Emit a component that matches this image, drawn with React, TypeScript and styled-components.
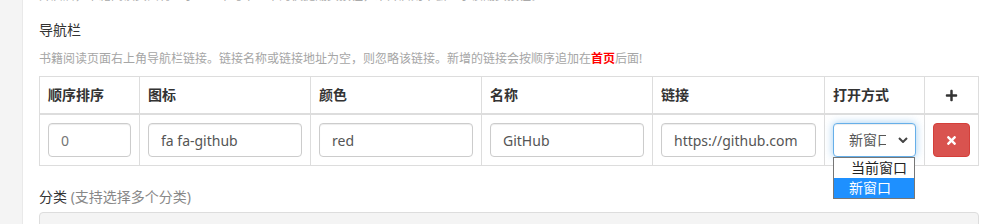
import React from "react";
import styled, { createGlobalStyle } from "styled-components";
import { FaPlus, FaTimes } from "react-icons/fa";

const GlobalStyle = createGlobalStyle`
  html, body {
    margin: 0;
    padding: 0;
    background: #fff;
  }
  body {
    font-family: "Noto Sans", "Noto Sans CJK SC", sans-serif;
    font-size: 14px;
    line-height: 20px;
    color: #333;
    overflow: hidden;
  }
  * {
    box-sizing: border-box;
  }
`;

const COLUMNS = [
  { title: "顺序排序", width: 100 },
  { title: "图标", width: 171 },
  { title: "颜色", width: 171 },
  { title: "名称", width: 171 },
  { title: "链接", width: 172 },
  { title: "打开方式", width: 100 },
];

const OPTIONS = ["当前窗口", "新窗口"];

const App = () => {
  return (
    <>
      <GlobalStyle />
      <StyledPage>
        <StyledSidebar />
        <StyledMain>
          <StyledPeekHint>
            开启后，书籍阅读页面将显示上一章与下一章的快捷翻页按钮，未开启则不会显示该翻页按钮。
          </StyledPeekHint>

          <StyledLabel $top={16} $bottom={10}>
            导航栏
          </StyledLabel>
          <StyledHelp>
            书籍阅读页面右上角导航栏链接。链接名称或链接地址为空，则忽略该链接。新增的链接会按顺序追加在
            <StyledStrong>首页</StyledStrong>后面!
          </StyledHelp>

          <StyledTable>
            <colgroup>
              {COLUMNS.map((col) => (
                <col key={col.title} style={{ width: col.width }} />
              ))}
              <col style={{ width: 54 }} />
            </colgroup>
            <thead>
              <tr>
                {COLUMNS.map((col) => (
                  <StyledTh key={col.title}>{col.title}</StyledTh>
                ))}
                <StyledTh $center>
                  <StyledPlus>
                    <FaPlus size={13} />
                  </StyledPlus>
                </StyledTh>
              </tr>
            </thead>
            <tbody>
              <tr>
                <StyledTd>
                  <StyledInput placeholder="0" readOnly />
                </StyledTd>
                <StyledTd>
                  <StyledInput defaultValue="fa fa-github" readOnly />
                </StyledTd>
                <StyledTd>
                  <StyledInput defaultValue="red" readOnly />
                </StyledTd>
                <StyledTd>
                  <StyledInput defaultValue="GitHub" readOnly />
                </StyledTd>
                <StyledTd>
                  <StyledInput defaultValue="https://github.com" readOnly />
                </StyledTd>
                <StyledTd>
                  <StyledSelect>
                    <StyledSelectValue>新窗口</StyledSelectValue>
                    <StyledChevron viewBox="0 0 10 6" width="10" height="6">
                      <path
                        d="M1 1 L5 5 L9 1"
                        fill="none"
                        stroke="#444"
                        strokeWidth="2"
                      />
                    </StyledChevron>
                    <StyledMenu>
                      {OPTIONS.map((opt) => (
                        <StyledOption key={opt} $active={opt === "新窗口"}>
                          {opt}
                        </StyledOption>
                      ))}
                    </StyledMenu>
                  </StyledSelect>
                </StyledTd>
                <StyledTd>
                  <StyledDangerButton>
                    <FaTimes size={13} />
                  </StyledDangerButton>
                </StyledTd>
              </tr>
            </tbody>
          </StyledTable>

          <StyledLabel $top={21} $bottom={5}>
            分类 <StyledMuted>(支持选择多个分类)</StyledMuted>
          </StyledLabel>
          <StyledDisabledBox />
        </StyledMain>
      </StyledPage>
    </>
  );
};

const StyledPage = styled.div`
  display: flex;
  width: 1006px;
  height: 224px;
  overflow: hidden;
`;

const StyledSidebar = styled.aside`
  flex: 0 0 23px;
  background: #f4f4f4;
  border-right: 1px solid #e9e9e9;
`;

const StyledMain = styled.main`
  flex: 1;
  padding: 0 28px 0 16px;
`;

const StyledPeekHint = styled.p`
  margin: -13px 0 0;
  font-size: 12px;
  line-height: 17px;
  color: #aaa;
  white-space: nowrap;
`;

const StyledLabel = styled.div<{ $top: number; $bottom: number }>`
  margin-top: ${(props) => props.$top}px;
  margin-bottom: ${(props) => props.$bottom}px;
  font-size: 14px;
  line-height: 20px;
  color: #333;
`;

const StyledHelp = styled.p`
  margin: 0 0 9px;
  font-size: 12px;
  line-height: 17px;
  color: #a6a6a6;
  white-space: nowrap;
`;

const StyledStrong = styled.strong`
  color: #f00;
  font-weight: bold;
`;

const StyledMuted = styled.span`
  color: #888;
`;

const StyledTable = styled.table`
  width: 940px;
  table-layout: fixed;
  border-collapse: collapse;
  border: 1px solid #ddd;
`;

const StyledTh = styled.th<{ $center?: boolean }>`
  padding: 8px;
  height: 36px;
  line-height: 20px;
  font-size: 14px;
  font-weight: bold;
  color: #333;
  text-align: ${(props) => (props.$center ? "center" : "left")};
  border: 1px solid #ddd;
  border-bottom: 2px solid #ddd;
  vertical-align: bottom;
`;

const StyledPlus = styled.span`
  display: inline-flex;
  vertical-align: middle;
  color: #333;
  margin-top: -2px;
`;

const StyledTd = styled.td`
  padding: 8px;
  border: 1px solid #ddd;
  vertical-align: top;
`;

const StyledInput = styled.input`
  display: block;
  width: 100%;
  height: 34px;
  padding: 6px 12px;
  font-family: "Noto Sans", "Noto Sans CJK SC", sans-serif;
  font-size: 14px;
  line-height: 20px;
  color: #555;
  background: #fff;
  border: 1px solid #ccc;
  border-radius: 4px;
  box-shadow: inset 0 1px 1px rgba(0, 0, 0, 0.075);
  outline: none;

  ::placeholder {
    color: #999;
  }
`;

const StyledSelect = styled.div`
  position: relative;
  display: flex;
  align-items: center;
  width: 100%;
  height: 34px;
  padding: 0 7px 0 15px;
  background: #fff;
  border: 1px solid #66afe9;
  border-radius: 4px;
  box-shadow: inset 0 1px 1px rgba(0, 0, 0, 0.075),
    0 0 8px rgba(102, 175, 233, 0.6);
`;

const StyledSelectValue = styled.span`
  flex: 0 0 37px;
  overflow: hidden;
  white-space: nowrap;
  font-size: 14px;
  color: #555;
`;

const StyledChevron = styled.svg`
  margin-left: auto;
`;

const StyledMenu = styled.ul`
  position: absolute;
  top: 33px;
  left: -1px;
  width: 82px;
  margin: 0;
  padding: 0;
  list-style: none;
  background: #fff;
  border: 1px solid #767676;
  z-index: 10;
`;

const StyledOption = styled.li<{ $active?: boolean }>`
  height: 20px;
  padding-left: ${(props) => (props.$active ? 15 : 17)}px;
  font-size: 14px;
  line-height: 20px;
  color: ${(props) => (props.$active ? "#fff" : "#222")};
  background: ${(props) => (props.$active ? "#1e90ff" : "#fff")};
  white-space: nowrap;
`;

const StyledDangerButton = styled.button`
  display: flex;
  align-items: center;
  justify-content: center;
  width: 37px;
  height: 34px;
  padding: 0;
  color: #fff;
  background: #d9534f;
  border: 1px solid #d43f3a;
  border-radius: 4px;
`;

const StyledDisabledBox = styled.div`
  height: 40px;
  background: #f4f4f4;
  border: 1px solid #ddd;
  border-radius: 4px;
`;

export default App;
